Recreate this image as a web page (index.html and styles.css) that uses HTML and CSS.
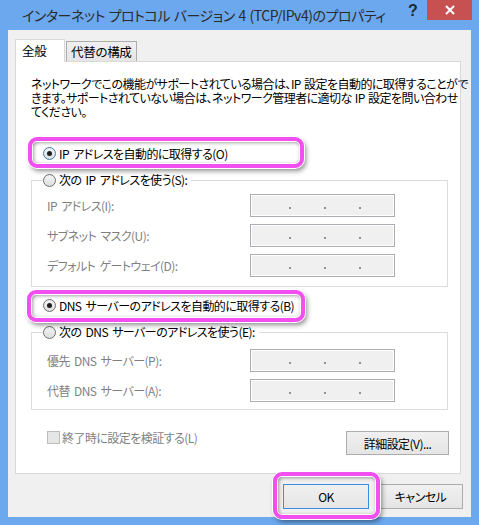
FILE: index.html
```html
<!DOCTYPE html>
<html lang="ja">
<head>
<meta charset="utf-8">
<link rel="stylesheet" href="styles.css">
</head>
<body>
<div class="window">
  <div class="titlebar">
    <div class="title">インターネット プロトコル バージョン 4 (TCP/IPv4)のプロパティ</div>
    <div class="help">?</div>
    <div class="close"><svg width="10" height="10" viewBox="0 0 10 10"><path d="M1 1L9 9M9 1L1 9" stroke="#fff" stroke-width="2"/></svg></div>
  </div>
  <div class="client">
    <div class="tabs">
      <div class="tab active">全般</div>
      <div class="tab">代替の構成</div>
    </div>
    <div class="panel">
      <p class="desc">ネットワークでこの機能がサポートされている場合は、IP 設定を自動的に取得することがで<br>きます。サポートされていない場合は、ネットワーク管理者に適切な IP 設定を問い合わせ<br>てください。</p>
      <div class="radio-row first"><span class="radio checked focus"></span><span>IP アドレスを自動的に取得する(O)</span></div>
      <fieldset class="group g1">
        <legend><span class="radio"></span><span>次の IP アドレスを使う(S):</span></legend>
        <div class="row"><span class="lbl">IP アドレス(I):</span><span class="ip"><i></i><i></i><i></i></span></div>
        <div class="row"><span class="lbl">サブネット マスク(U):</span><span class="ip"><i></i><i></i><i></i></span></div>
        <div class="row"><span class="lbl">デフォルト ゲートウェイ(D):</span><span class="ip"><i></i><i></i><i></i></span></div>
      </fieldset>
      <div class="radio-row second"><span class="radio checked"></span><span>DNS サーバーのアドレスを自動的に取得する(B)</span></div>
      <fieldset class="group g2">
        <legend><span class="radio"></span><span>次の DNS サーバーのアドレスを使う(E):</span></legend>
        <div class="row"><span class="lbl">優先 DNS サーバー(P):</span><span class="ip"><i></i><i></i><i></i></span></div>
        <div class="row"><span class="lbl">代替 DNS サーバー(A):</span><span class="ip"><i></i><i></i><i></i></span></div>
      </fieldset>
      <div class="bottom-row">
        <div class="check"><span class="box"></span><span>終了時に設定を検証する(L)</span></div>
        <div class="btn adv">詳細設定(V)...</div>
      </div>
    </div>
    <div class="buttons">
      <div class="btn ok">OK</div>
      <div class="btn cancel">キャンセル</div>
    </div>
  </div>
</div>
<div class="hl hl1"></div>
<div class="hl hl2"></div>
<div class="hl hl3"></div>
</body>
</html>
```

FILE: styles.css
```css
html, body {
  margin: 0;
  padding: 0;
}
body {
  width: 479px;
  height: 525px;
  background: #6ba8ee;
  position: relative;
  overflow: hidden;
  font-family: "Noto Sans CJK JP", "Noto Sans", sans-serif;
  font-feature-settings: "palt";
  font-size: 12px;
  letter-spacing: -0.55px;
  word-spacing: 2px;
  color: #000;
}
.window {
  padding: 0 8px 8px 8px;
}
.titlebar {
  height: 30px;
  display: flex;
  align-items: flex-start;
  position: relative;
}
.title {
  margin-left: 14px;
  margin-top: 4px;
  font-size: 14px;
  line-height: 22px;
  color: #2b2b2b;
  white-space: nowrap;
  flex: 1;
  min-width: 0;
  letter-spacing: -0.45px;
  word-spacing: 1px;
}
.help {
  margin-top: 1px;
  width: 14px;
  font-family: "Liberation Sans", sans-serif;
  font-weight: bold;
  font-size: 16px;
  line-height: 20px;
  color: #1e2a3a;
  margin-right: 5px;
  flex: none;
}
.close {
  width: 45px;
  height: 20px;
  background: #c75050;
  display: flex;
  align-items: center;
  justify-content: center;
  margin-right: -1px;
  flex: none;
}
.client {
  background: #f0f0f0;
  height: 487px;
  box-sizing: border-box;
  padding: 9px 10px 0 7px;
}
.tabs {
  display: flex;
  align-items: flex-end;
  height: 22px;
  position: relative;
  z-index: 2;
}
.tab {
  box-sizing: border-box;
  height: 20px;
  border: 1px solid #acacac;
  border-bottom: none;
  background: linear-gradient(#f0f0f0, #e5e5e5);
  padding: 0 4px 0 4px;
  line-height: 19px;
  font-size: 12.5px;
  letter-spacing: -0.3px;
  margin-left: 1px;
}
.tab.active {
  height: 23px;
  width: 50px;
  background: #fff;
  border-color: #d9d9d9;
  margin-left: 0;
  margin-bottom: -1px;
  padding-left: 6px;
  line-height: 22px;
}
.panel {
  box-sizing: border-box;
  height: 413px;
  background: #fff;
  border: 1px solid #d9d9d9;
  padding: 15px 13px 0 15px;
  position: relative;
}
.desc {
  margin: 0;
  line-height: 14px;
  white-space: nowrap;
  word-spacing: 1px;
}
.radio-row {
  display: flex;
  align-items: center;
  height: 16px;
  padding-left: 12px;
  gap: 3px;
}
.radio-row.first {
  margin-top: 26px;
}
.radio-row.second {
  margin-top: 10px;
}
.radio {
  display: inline-block;
  box-sizing: border-box;
  width: 13px;
  height: 13px;
  border-radius: 50%;
  border: 1px solid #707070;
  background: linear-gradient(#f4f4f4, #dedede);
  position: relative;
  flex: none;
}
.radio.checked::after {
  content: "";
  position: absolute;
  left: 3px;
  top: 3px;
  width: 5px;
  height: 5px;
  border-radius: 50%;
  background: #1f1f1f;
}
.radio.focus {
  border-color: #3c7fb1;
}
.group {
  margin: 11px 0 0 0;
  padding: 6px 0 9px 15px;
  border: 1px solid #dcdcdc;
  width: 417px;
  box-sizing: border-box;
}
.group.g2 {
  padding-top: 9px;
  padding-bottom: 7px;
}
.group legend {
  padding: 0 4px 0 0;
  margin-left: -4px;
  display: flex;
  align-items: center;
  gap: 3px;
  height: 16px;
  line-height: 16px;
}
.row {
  display: grid;
  grid-template-columns: 203px 145px;
  align-items: center;
  height: 23px;
}
.row + .row {
  margin-top: 7px;
}
.lbl {
  color: #7f7f7f;
}
.ip {
  box-sizing: border-box;
  height: 23px;
  border: 1px solid #abadb3;
  box-shadow: inset 0 0 0 1px #fff;
  background: #f0f0f0;
  display: flex;
  align-items: flex-end;
  padding: 0 0 7px 38px;
  gap: 33px;
}
.ip i {
  display: block;
  width: 2px;
  height: 2px;
  background: #9a8f86;
}
.bottom-row {
  display: flex;
  justify-content: space-between;
  align-items: flex-start;
  margin-top: 21px;
  padding-left: 16px;
  width: 418px;
  box-sizing: border-box;
}
.check {
  display: flex;
  align-items: center;
  gap: 2px;
  height: 13px;
  color: #7f7f7f;
}
.check .box {
  box-sizing: border-box;
  width: 13px;
  height: 13px;
  border: 1px solid #bcbcbc;
  background: #e6e6e6;
}
.btn {
  box-sizing: border-box;
  border: 1px solid #acacac;
  background: linear-gradient(#f0f0f0, #e5e5e5);
  display: flex;
  align-items: center;
  justify-content: center;
}
.adv {
  width: 103px;
  height: 24px;
}
.buttons {
  display: flex;
  justify-content: flex-end;
  gap: 9px;
  margin-top: 10px;
  margin-right: -2px;
}
.ok {
  width: 86px;
  height: 25px;
  border-color: #3c8fe0;
}
.cancel {
  width: 85px;
  height: 25px;
}
.hl {
  position: absolute;
  box-sizing: border-box;
  border: 4px solid #f24ef0;
  border-radius: 9px;
  box-shadow: inset 0 0 0 1px #fff, inset 1px 1px 4px rgba(0,0,0,0.55), 0 0 0 1px #fff, 2px 3px 5px rgba(0,0,0,0.45);
}
.hl1 { left: 28px; top: 137px; width: 276px; height: 31px; }
.hl2 { left: 27px; top: 290px; width: 278px; height: 32px; }
.hl3 { left: 273px; top: 472px; width: 107px; height: 47px; }
```
